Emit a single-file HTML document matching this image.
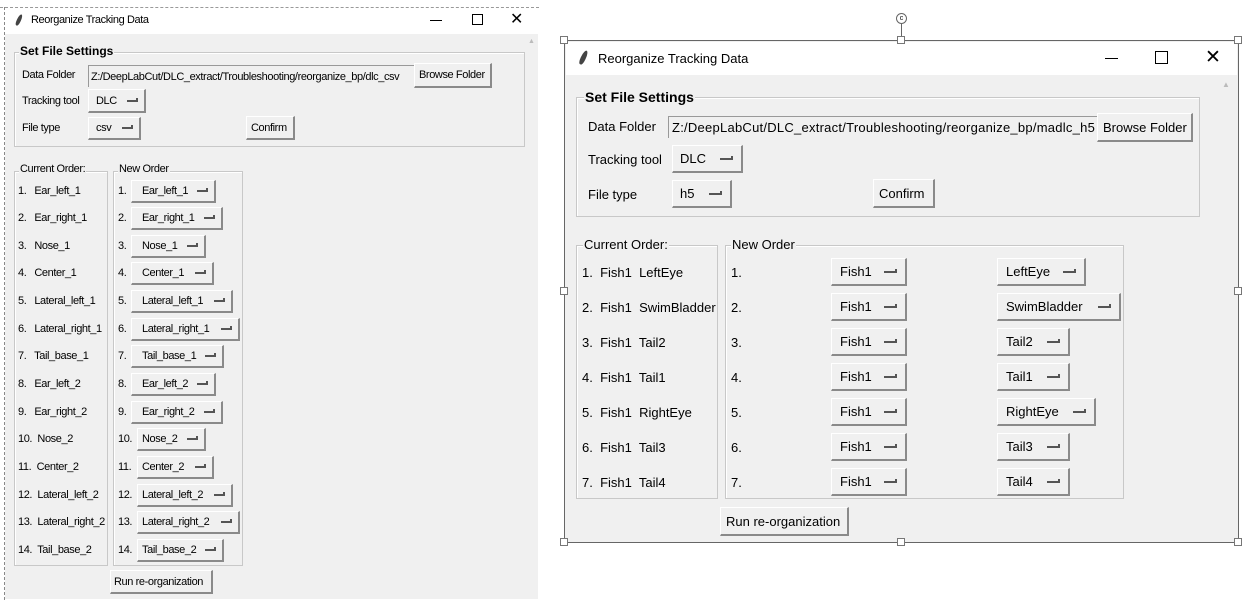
<!DOCTYPE html><html><head><meta charset="utf-8"><style>
*{margin:0;padding:0;box-sizing:border-box}
body{width:1247px;height:611px;background:#fff;position:relative;overflow:hidden;font-family:"Liberation Sans",sans-serif;color:#000}
.a{position:absolute;white-space:nowrap}
.L{font-size:11px;letter-spacing:-0.4px}
.R{font-size:13px}
.fr{position:absolute;border:1px solid #c8c8c8;box-shadow:inset 1px 1px 0 #fff}
.lab{position:absolute;background:#f0f0f0;padding:0 1px;line-height:1}
.btn{position:absolute;background:#f0f0f0;border:1px solid #fff;border-right:2px solid #8a8a8a;border-bottom:2px solid #8a8a8a;display:flex;align-items:center;white-space:nowrap}
.ind{display:inline-block;position:absolute;right:8px;top:50%;width:13px;height:4px;border-bottom:2px solid #555;border-right:2px solid #555;margin-top:-3px}
.L .ind{width:11px;right:6px}
.ent{position:absolute;background:#f0f0f0;border-top:1px solid #999;border-left:1px solid #999;display:flex;align-items:center;white-space:nowrap;overflow:hidden}
.h{position:absolute;width:8px;height:8px;background:#fff;border:1px solid #777}
.feather{position:absolute;width:4px;height:12px;background:#444;border-radius:50% 50% 40% 40%;transform:rotate(25deg)}
</style></head><body>
<!-- LEFT WINDOW -->
<div class="a" style="left:0;top:7px;width:539px;height:0;border-top:1px dashed #999"></div>
<div class="a" style="left:4px;top:7px;width:0;height:593px;border-left:1px dashed #888"></div>
<div class="a" style="left:5px;top:34px;width:533px;height:565px;background:#f0f0f0"></div>
<div class="feather" style="left:17px;top:14px"></div>
<div class="a L" style="left:31px;top:14px">Reorganize Tracking Data</div>
<div class="a" style="left:430px;top:20px;width:12px;border-top:1px solid #000"></div>
<div class="a" style="left:472px;top:14px;width:11px;height:11px;border:1px solid #000"></div>
<div class="a" style="left:510px;top:9px;font-size:16px">✕</div>
<div class="a" style="left:528px;top:38px;font-size:7px;color:#bbb">▲</div>
<div class="L">
<div class="fr" style="left:14px;top:52px;width:511px;height:95px"></div>
<div class="lab" style="left:19px;top:45px;font-weight:bold;font-size:12px;letter-spacing:0">Set File Settings</div>
<div class="a" style="left:22px;top:69px">Data Folder</div>
<div class="ent" style="left:88px;top:65px;width:326px;height:22px;padding-left:2px">Z:/DeepLabCut/DLC_extract/Troubleshooting/reorganize_bp/dlc_csv</div>
<div class="btn" style="left:414px;top:63px;width:78px;height:25px;padding-left:4px">Browse Folder</div>
<div class="a" style="left:22px;top:95px">Tracking tool</div>
<div class="btn" style="left:88px;top:89px;width:58px;height:24px;padding-left:7px">DLC<span class="ind"></span></div>
<div class="a" style="left:22px;top:122px">File type</div>
<div class="btn" style="left:88px;top:117px;width:53px;height:23px;padding-left:7px">csv<span class="ind"></span></div>
<div class="btn" style="left:246px;top:116px;width:49px;height:24px;padding-left:4px">Confirm</div>
<div class="fr" style="left:14px;top:171px;width:94px;height:395px"></div>
<div class="lab" style="left:19px;top:164px">Current Order:</div>
<div class="fr" style="left:113px;top:171px;width:130px;height:395px"></div>
<div class="lab" style="left:118px;top:164px">New Order</div>
<div class="a" style="left:18px;top:185px">1.&nbsp;&nbsp; Ear_left_1</div>
<div class="a" style="left:18px;top:212px">2.&nbsp;&nbsp; Ear_right_1</div>
<div class="a" style="left:18px;top:240px">3.&nbsp;&nbsp; Nose_1</div>
<div class="a" style="left:18px;top:267px">4.&nbsp;&nbsp; Center_1</div>
<div class="a" style="left:18px;top:295px">5.&nbsp;&nbsp; Lateral_left_1</div>
<div class="a" style="left:18px;top:323px">6.&nbsp;&nbsp; Lateral_right_1</div>
<div class="a" style="left:18px;top:350px">7.&nbsp;&nbsp; Tail_base_1</div>
<div class="a" style="left:18px;top:378px">8.&nbsp;&nbsp; Ear_left_2</div>
<div class="a" style="left:18px;top:406px">9.&nbsp;&nbsp; Ear_right_2</div>
<div class="a" style="left:18px;top:433px">10.&nbsp; Nose_2</div>
<div class="a" style="left:18px;top:461px">11.&nbsp; Center_2</div>
<div class="a" style="left:18px;top:489px">12.&nbsp; Lateral_left_2</div>
<div class="a" style="left:18px;top:516px">13.&nbsp; Lateral_right_2</div>
<div class="a" style="left:18px;top:544px">14.&nbsp; Tail_base_2</div>
<div class="a" style="left:118px;top:185px">1.</div><div class="btn" style="left:131px;top:180px;width:85px;height:23px;padding-left:10px">Ear_left_1<span class="ind"></span></div>
<div class="a" style="left:118px;top:212px">2.</div><div class="btn" style="left:131px;top:207px;width:92px;height:23px;padding-left:10px">Ear_right_1<span class="ind"></span></div>
<div class="a" style="left:118px;top:240px">3.</div><div class="btn" style="left:131px;top:235px;width:75px;height:23px;padding-left:10px">Nose_1<span class="ind"></span></div>
<div class="a" style="left:118px;top:267px">4.</div><div class="btn" style="left:131px;top:262px;width:83px;height:23px;padding-left:10px">Center_1<span class="ind"></span></div>
<div class="a" style="left:118px;top:295px">5.</div><div class="btn" style="left:131px;top:290px;width:102px;height:23px;padding-left:10px">Lateral_left_1<span class="ind"></span></div>
<div class="a" style="left:118px;top:323px">6.</div><div class="btn" style="left:131px;top:318px;width:109px;height:23px;padding-left:10px">Lateral_right_1<span class="ind"></span></div>
<div class="a" style="left:118px;top:350px">7.</div><div class="btn" style="left:131px;top:345px;width:93px;height:23px;padding-left:10px">Tail_base_1<span class="ind"></span></div>
<div class="a" style="left:118px;top:378px">8.</div><div class="btn" style="left:131px;top:373px;width:85px;height:23px;padding-left:10px">Ear_left_2<span class="ind"></span></div>
<div class="a" style="left:118px;top:406px">9.</div><div class="btn" style="left:131px;top:401px;width:92px;height:23px;padding-left:10px">Ear_right_2<span class="ind"></span></div>
<div class="a" style="left:118px;top:433px">10.</div><div class="btn" style="left:137px;top:428px;width:69px;height:23px;padding-left:4px">Nose_2<span class="ind"></span></div>
<div class="a" style="left:118px;top:461px">11.</div><div class="btn" style="left:137px;top:456px;width:77px;height:23px;padding-left:4px">Center_2<span class="ind"></span></div>
<div class="a" style="left:118px;top:489px">12.</div><div class="btn" style="left:137px;top:484px;width:96px;height:23px;padding-left:4px">Lateral_left_2<span class="ind"></span></div>
<div class="a" style="left:118px;top:516px">13.</div><div class="btn" style="left:137px;top:511px;width:103px;height:23px;padding-left:4px">Lateral_right_2<span class="ind"></span></div>
<div class="a" style="left:118px;top:544px">14.</div><div class="btn" style="left:137px;top:539px;width:87px;height:23px;padding-left:4px">Tail_base_2<span class="ind"></span></div>
<div class="btn" style="left:110px;top:570px;width:103px;height:24px;padding-left:3px">Run re-organization</div>
</div>

<!-- RIGHT WINDOW -->
<div class="a" style="left:564px;top:40px;width:675px;height:503px;border:1.5px solid #666;background:#f0f0f0"></div>
<div class="a" style="left:566px;top:42px;width:671px;height:33px;background:#fff"></div>
<div class="a" style="left:901px;top:22px;width:0;height:18px;border-left:1px solid #666"></div>
<div class="a" style="left:896px;top:13px;width:11px;height:11px;border:1px solid #666;border-radius:50%;font-size:7px;line-height:9px;text-align:center;background:#fff">c</div>
<div class="h" style="left:560px;top:36px"></div><div class="h" style="left:897px;top:36px"></div><div class="h" style="left:1234px;top:36px"></div>
<div class="h" style="left:560px;top:287px"></div><div class="h" style="left:1234px;top:287px"></div>
<div class="h" style="left:560px;top:538px"></div><div class="h" style="left:897px;top:538px"></div><div class="h" style="left:1234px;top:538px"></div>
<div class="feather" style="left:581px;top:50px;width:5px;height:15px"></div>
<div class="a R" style="left:598px;top:51px">Reorganize Tracking Data</div>
<div class="a" style="left:1105px;top:58px;width:13px;border-top:1px solid #000"></div>
<div class="a" style="left:1155px;top:51px;width:13px;height:13px;border:1px solid #000"></div>
<div class="a" style="left:1205px;top:46px;font-size:19px">✕</div>
<div class="a" style="left:1222px;top:80px;font-size:8px;color:#bbb">▲</div>
<div class="R">
<div class="fr" style="left:576px;top:97px;width:624px;height:120px"></div>
<div class="lab" style="left:584px;top:90px;font-weight:bold;font-size:14px">Set File Settings</div>
<div class="a" style="left:588px;top:119px">Data Folder</div>
<div class="ent" style="left:668px;top:116px;width:429px;height:22px;padding-left:3px;letter-spacing:0.25px">Z:/DeepLabCut/DLC_extract/Troubleshooting/reorganize_bp/madlc_h5</div>
<div class="btn" style="left:1097px;top:113px;width:96px;height:29px;padding-left:5px">Browse Folder</div>
<div class="a" style="left:588px;top:152px">Tracking tool</div>
<div class="btn" style="left:672px;top:145px;width:71px;height:28px;padding-left:7px">DLC<span class="ind"></span></div>
<div class="a" style="left:588px;top:187px">File type</div>
<div class="btn" style="left:672px;top:180px;width:60px;height:28px;padding-left:7px">h5<span class="ind"></span></div>
<div class="btn" style="left:873px;top:179px;width:62px;height:29px;padding-left:5px">Confirm</div>
<div class="fr" style="left:576px;top:245px;width:142px;height:254px"></div>
<div class="lab" style="left:583px;top:238px">Current Order:</div>
<div class="fr" style="left:725px;top:245px;width:399px;height:254px"></div>
<div class="lab" style="left:731px;top:238px">New Order</div>
<div class="a" style="left:582px;top:265px">1.&nbsp; Fish1&nbsp; LeftEye</div>
<div class="a" style="left:582px;top:300px">2.&nbsp; Fish1&nbsp; SwimBladder</div>
<div class="a" style="left:582px;top:335px">3.&nbsp; Fish1&nbsp; Tail2</div>
<div class="a" style="left:582px;top:370px">4.&nbsp; Fish1&nbsp; Tail1</div>
<div class="a" style="left:582px;top:405px">5.&nbsp; Fish1&nbsp; RightEye</div>
<div class="a" style="left:582px;top:440px">6.&nbsp; Fish1&nbsp; Tail3</div>
<div class="a" style="left:582px;top:475px">7.&nbsp; Fish1&nbsp; Tail4</div>

<div class="a" style="left:731px;top:265px">1.</div><div class="btn" style="left:831px;top:258px;width:76px;height:28px;padding-left:8px">Fish1<span class="ind"></span></div><div class="btn" style="left:997px;top:258px;width:89px;height:28px;padding-left:8px">LeftEye<span class="ind"></span></div>
<div class="a" style="left:731px;top:300px">2.</div><div class="btn" style="left:831px;top:293px;width:76px;height:28px;padding-left:8px">Fish1<span class="ind"></span></div><div class="btn" style="left:997px;top:293px;width:124px;height:28px;padding-left:8px">SwimBladder<span class="ind"></span></div>
<div class="a" style="left:731px;top:335px">3.</div><div class="btn" style="left:831px;top:328px;width:76px;height:28px;padding-left:8px">Fish1<span class="ind"></span></div><div class="btn" style="left:997px;top:328px;width:73px;height:28px;padding-left:8px">Tail2<span class="ind"></span></div>
<div class="a" style="left:731px;top:370px">4.</div><div class="btn" style="left:831px;top:363px;width:76px;height:28px;padding-left:8px">Fish1<span class="ind"></span></div><div class="btn" style="left:997px;top:363px;width:73px;height:28px;padding-left:8px">Tail1<span class="ind"></span></div>
<div class="a" style="left:731px;top:405px">5.</div><div class="btn" style="left:831px;top:398px;width:76px;height:28px;padding-left:8px">Fish1<span class="ind"></span></div><div class="btn" style="left:997px;top:398px;width:99px;height:28px;padding-left:8px">RightEye<span class="ind"></span></div>
<div class="a" style="left:731px;top:440px">6.</div><div class="btn" style="left:831px;top:433px;width:76px;height:28px;padding-left:8px">Fish1<span class="ind"></span></div><div class="btn" style="left:997px;top:433px;width:73px;height:28px;padding-left:8px">Tail3<span class="ind"></span></div>
<div class="a" style="left:731px;top:475px">7.</div><div class="btn" style="left:831px;top:468px;width:76px;height:28px;padding-left:8px">Fish1<span class="ind"></span></div><div class="btn" style="left:997px;top:468px;width:73px;height:28px;padding-left:8px">Tail4<span class="ind"></span></div>
<div class="btn" style="left:720px;top:507px;width:129px;height:29px;padding-left:5px">Run re-organization</div>
</div>
</body></html>
